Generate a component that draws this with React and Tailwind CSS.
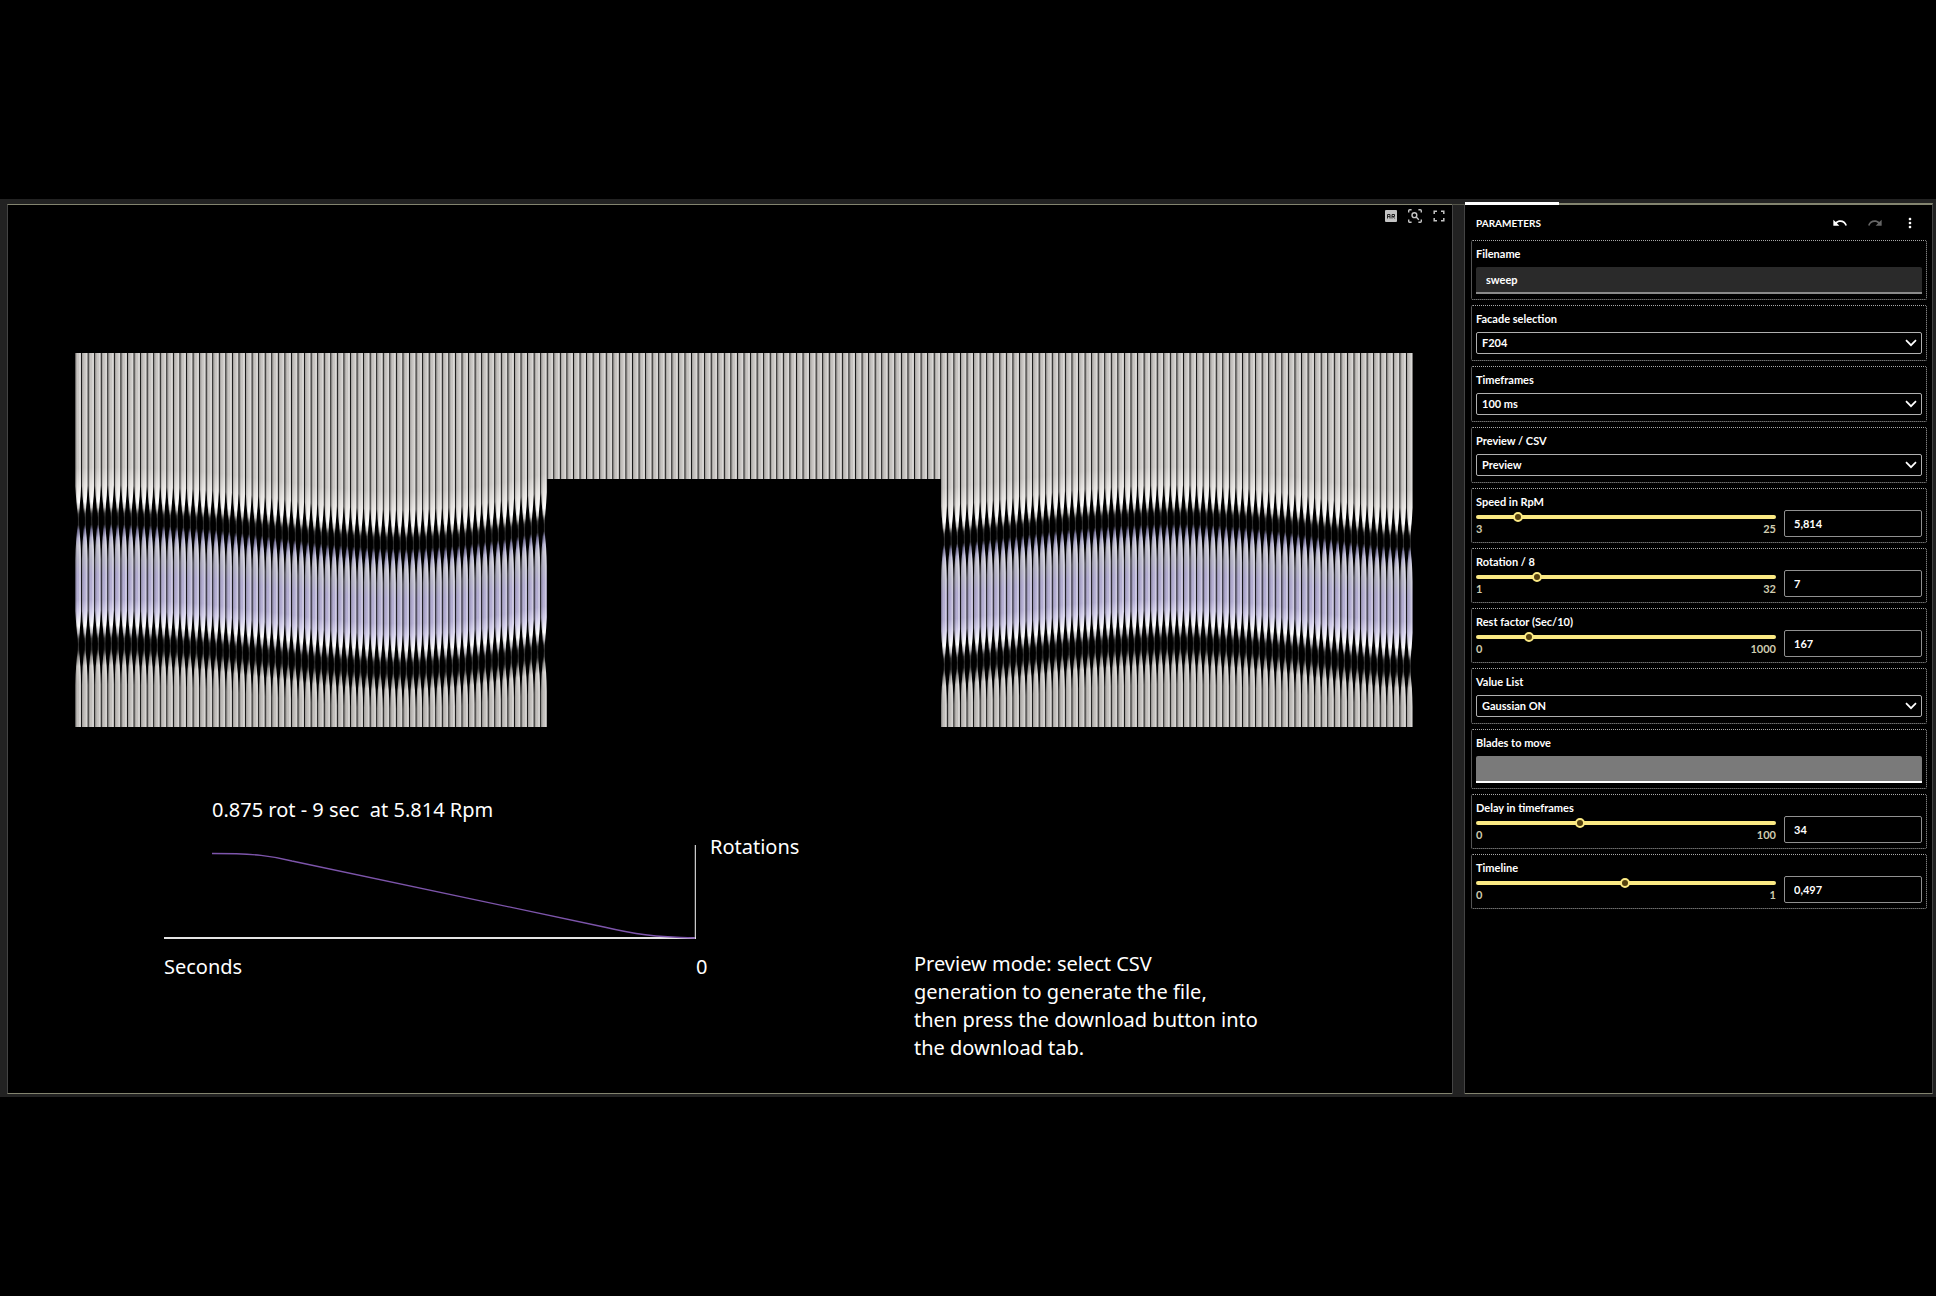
import { useState } from "react";
import { MdMoreVert, MdRedo, MdUndo } from "react-icons/md";

const PITCH = 1338 / 204;
const FACADE_HEIGHT = 374;
const DOOR_HEIGHT = 126;
const TWIST_GAP = 125;

// [x, y] of the first twist of the blades, on both wings of the facade
const LEFT_WAVE = [
  [0, 167],
  [35, 166],
  [85, 168],
  [130, 171],
  [202, 180],
  [245, 186],
  [295, 190],
  [328, 191],
  [378, 188],
  [428, 181],
  [472, 172],
];
const RIGHT_WAVE = [
  [866, 187],
  [925, 180],
  [985, 172],
  [1035, 168],
  [1080, 166],
  [1115, 166],
  [1165, 169],
  [1215, 175],
  [1265, 183],
  [1305, 188],
  [1338, 189],
];

// half width of a blade around one twist
const TWIST_PROFILE = [
  [-34, 2.85],
  [-24, 2.3],
  [-15, 1.5],
  [-8, 1],
  [0, 0.8],
  [8, 1],
  [15, 1.6],
  [22, 2.2],
  [30, 2.6],
  [40, 2.85],
];

const BLADE_STOPS = [
  [-190, "#c6c3c0"],
  [-52, "#cac7c4"],
  [-30, "#ebe8e5"],
  [-18, "#ffffff"],
  [-12, "#cac8c6"],
  [-6, "#262626"],
  [-2, "#080808"],
  [5, "#080808"],
  [10, "#6c6990"],
  [18, "#b3b0d0"],
  [26, "#c6c4d2"],
  [40, "#b7b5c8"],
  [55, "#b2acd0"],
  [80, "#b5afd3"],
  [92, "#d2cdea"],
  [106, "#ffffff"],
  [113, "#b8b6bc"],
  [119, "#262626"],
  [124, "#080808"],
  [130, "#181818"],
  [137, "#8c8a88"],
  [146, "#cfccc9"],
  [164, "#bfbcb9"],
  [240, "#c6c3c0"],
];

function waveAt(wave, x) {
  for (let i = 1; i < wave.length; i++) {
    const [x0, y0] = wave[i - 1];
    const [x1, y1] = wave[i];
    if (x <= x1) return y0 + ((y1 - y0) * (x - x0)) / (x1 - x0);
  }
  return wave[wave.length - 1][1];
}

function bladePath(from, to) {
  const profile = [
    [-200, 2.85],
    ...TWIST_PROFILE,
    ...TWIST_PROFILE.map(([y, w]) => [y + TWIST_GAP, w]),
    [250, 2.85],
  ];
  const c = PITCH / 2;
  const right = profile.map(([y, w]) => `${(c + w * to).toFixed(2)} ${y}`);
  const left = profile
    .map(([y, w]) => `${(c + w * from).toFixed(2)} ${y}`)
    .reverse();
  return `M${right.concat(left).join("L")}Z`;
}

function Facade() {
  const blades = Array.from({ length: 204 }, (_, i) => i);
  const wings = blades.filter((i) => i < 72 || i >= 132);
  const middle = blades.filter((i) => i >= 72 && i < 132);

  return (
    <svg
      viewBox={`0 0 1338 ${FACADE_HEIGHT}`}
      className="block w-full"
      role="img"
      aria-label="Facade"
    >
      <defs>
        <linearGradient
          id="bladeFill"
          gradientUnits="userSpaceOnUse"
          x1="0"
          y1="-190"
          x2="0"
          y2="240"
        >
          {BLADE_STOPS.map(([y, color]) => (
            <stop key={y} offset={(y + 190) / 430} stopColor={color} />
          ))}
        </linearGradient>
        <clipPath id="facadeClip">
          <rect width="1338" height={FACADE_HEIGHT} />
        </clipPath>
        <g id="blade">
          <path d={bladePath(-1, 1)} fill="url(#bladeFill)" />
          <path d={bladePath(-1, -0.5)} fill="#000" opacity="0.15" />
          <path d={bladePath(0.3, 0.85)} fill="#fff" opacity="0.35" />
        </g>
      </defs>
      <g clipPath="url(#facadeClip)">
        {wings.map((i) => {
          const x = i * PITCH;
          const y = waveAt(i < 72 ? LEFT_WAVE : RIGHT_WAVE, x);
          return <use key={i} href="#blade" x={x} y={y} />;
        })}
      </g>
      {middle.map((i) => (
        <g key={i} transform={`translate(${i * PITCH} 0)`}>
          <rect x="0.4" width="5.7" height={DOOR_HEIGHT} fill="#c6c3c0" />
          <rect
            x="0.4"
            width="1.4"
            height={DOOR_HEIGHT}
            fill="#000"
            opacity="0.15"
          />
          <rect
            x="4.1"
            width="1.6"
            height={DOOR_HEIGHT}
            fill="#fff"
            opacity="0.35"
          />
        </g>
      ))}
    </svg>
  );
}

function RotationChart() {
  return (
    <figure className="w-[532px]">
      <figcaption className="pl-12 whitespace-pre">
        0.875 rot - 9 sec  at 5.814 Rpm
      </figcaption>
      <div className="mt-[9px] flex items-start">
        <svg
          viewBox="0 0 532 106"
          className="w-[532px] shrink-0"
          fill="none"
          aria-hidden="true"
        >
          <path d="M531.5 12V106" stroke="#c8c8c8" strokeWidth="1.5" />
          <path d="M0 105H532" stroke="#e4e4e4" strokeWidth="2" />
          <path
            d="M48 20.5C92 20.5 108 23 128 28L440 94C470 101 490 104 531 105"
            stroke="#7d55ab"
            strokeWidth="1.3"
          />
        </svg>
        <span className="ml-[14px]">Rotations</span>
      </div>
      <div className="mt-[14px] flex justify-between">
        <span>Seconds</span>
        <span className="w-0">0</span>
      </div>
    </figure>
  );
}

function Viewer() {
  return (
    <main className="mt-px min-w-0 flex-1 border-t border-b border-l border-t-[#83846f] border-b-[#83846f] border-l-[#444] bg-black pb-[31px] font-['Noto_Sans','Open_Sans',sans-serif] text-[20px] leading-7 text-white">
      <div className="flex justify-end gap-[10px] pt-1 pr-[6px] text-[#c4c4c4]">
        <button aria-label="View in AR">
          <svg viewBox="0 0 14 14" className="size-[14px]">
            <rect x="1" y="1" width="12" height="12" rx="1" fill="currentColor" />
            <path
              d="M3.5 9.5V5.5h2.5v4M3.5 7.6h2.5M8 9.5V5.5h2.5v2H8M9.3 7.6l1.3 1.9"
              fill="none"
              stroke="#222"
              strokeWidth="1"
            />
          </svg>
        </button>
        <button aria-label="Zoom to fit">
          <svg
            viewBox="0 0 14 14"
            className="size-[14px]"
            fill="none"
            stroke="currentColor"
            strokeWidth="1.4"
          >
            <path d="M.7 3.6V1.7a1 1 0 0 1 1-1h1.9M10.4.7h1.9a1 1 0 0 1 1 1v1.9M13.3 10.4v1.9a1 1 0 0 1-1 1h-1.9M3.6 13.3H1.7a1 1 0 0 1-1-1v-1.9" />
            <circle cx="6.4" cy="6.2" r="2.4" />
            <path d="M8.2 8l2.6 2.7" />
          </svg>
        </button>
        <button className="px-px" aria-label="Fullscreen">
          <svg
            viewBox="0 0 12 14"
            className="h-[14px] w-3"
            fill="none"
            stroke="currentColor"
            strokeWidth="1.5"
          >
            <path d="M1.2 5V2.2H4M8 2.2h2.8V5M10.8 9v2.8H8M4 11.8H1.2V9" />
          </svg>
        </button>
      </div>
      <div className="pt-[130px] pr-[39px] pl-[67px]">
        <Facade />
      </div>
      <div className="mt-[69px] flex items-start pl-[156px]">
        <RotationChart />
        <p className="ml-[218px] w-[350px] pt-[154px]">
          Preview mode: select CSV
          <br />
          generation to generate the file,
          <br />
          then press the download button into
          <br />
          the download tab.
        </p>
      </div>
    </main>
  );
}

function Field(props) {
  return (
    <div className="rounded-xs border border-dotted border-[#a8a8a8] px-1 py-[5px]">
      {props.children}
    </div>
  );
}

function TextField(props) {
  return (
    <Field>
      <label htmlFor={props.id} className="block">
        {props.label}
      </label>
      <input
        id={props.id}
        type="text"
        defaultValue={props.value}
        className={`mt-[5px] block h-[27px] w-full rounded-t-xs border-b-2 px-[10px] outline-none ${props.className}`}
      />
    </Field>
  );
}

function SelectField(props) {
  return (
    <Field>
      <label htmlFor={props.id} className="block">
        {props.label}
      </label>
      <div className="relative mt-[5px] h-[23px]">
        <select
          id={props.id}
          defaultValue={props.options[0]}
          className="block h-[22px] w-full appearance-none rounded-xs border border-[#b0b0b0] bg-black px-[5px] outline-none"
        >
          {props.options.map((option) => (
            <option key={option}>{option}</option>
          ))}
        </select>
        <svg
          viewBox="0 0 12 8"
          className="pointer-events-none absolute top-[7px] right-[5px] h-2 w-3"
          fill="none"
          stroke="#fff"
          strokeWidth="1.7"
          aria-hidden="true"
        >
          <path d="M1 1.2l5 5 5-5" />
        </svg>
      </div>
    </Field>
  );
}

function SliderField(props) {
  const [value, setValue] = useState(props.value);

  return (
    <Field>
      <div className="flex h-[43px] gap-2">
        <div className="min-w-0 flex-1">
          <label htmlFor={props.id} className="block">
            {props.label}
          </label>
          <input
            id={props.id}
            type="range"
            min={props.min}
            max={props.max}
            step={props.step}
            value={value}
            onChange={(e) => setValue(Number(e.target.value))}
            className="mt-[2px] block h-[10px] w-full appearance-none bg-transparent outline-none [&::-webkit-slider-runnable-track]:h-1 [&::-webkit-slider-runnable-track]:rounded-full [&::-webkit-slider-runnable-track]:bg-[#fbe983] [&::-webkit-slider-thumb]:-mt-[3px] [&::-webkit-slider-thumb]:size-[10px] [&::-webkit-slider-thumb]:appearance-none [&::-webkit-slider-thumb]:rounded-full [&::-webkit-slider-thumb]:border-2 [&::-webkit-slider-thumb]:border-[#fbe983] [&::-webkit-slider-thumb]:bg-[#54400f]"
          />
          <div className="mt-px flex justify-between leading-3 text-[#cfccb0]">
            <span>{props.min}</span>
            <span>{props.max}</span>
          </div>
        </div>
        <input
          type="text"
          inputMode="decimal"
          aria-label={`${props.label} value`}
          value={String(value).replace(".", ",")}
          onChange={(e) => {
            const next = Number(e.target.value.replace(",", "."));
            if (!Number.isNaN(next)) setValue(next);
          }}
          className="h-[27px] w-[138px] self-end rounded-xs border border-[#909090] bg-black px-[9px] outline-none"
        />
      </div>
    </Field>
  );
}

function Parameters() {
  return (
    <aside className="relative w-[468px] shrink-0 border-t-2 border-r border-b border-t-[#83846f] border-r-[#444] border-b-[#83846f] bg-black pr-[5px] pl-[6px] font-['Lato',sans-serif] text-[11px] leading-4 font-bold text-white">
      <div className="absolute -top-[3px] left-0 h-[3px] w-[94px] bg-white" />
      <div className="flex h-[35px] items-center justify-between pr-[9px] pl-[5px]">
        <h2 className="text-[10px]">PARAMETERS</h2>
        <div className="flex gap-[19px]">
          <button aria-label="Undo">
            <MdUndo className="size-4" />
          </button>
          <button aria-label="Redo" className="text-[#666]">
            <MdRedo className="size-4" />
          </button>
          <button aria-label="More options">
            <MdMoreVert className="size-4" />
          </button>
        </div>
      </div>
      <div className="flex flex-col gap-[5px]">
        <TextField
          id="filename"
          label="Filename"
          value="sweep"
          className="border-[#8a8a8a] bg-[#2a2a2a]"
        />
        <SelectField id="facade" label="Facade selection" options={["F204"]} />
        <SelectField id="timeframes" label="Timeframes" options={["100 ms"]} />
        <SelectField
          id="mode"
          label="Preview / CSV"
          options={["Preview", "CSV generation"]}
        />
        <SliderField
          id="speed"
          label="Speed in RpM"
          min={3}
          max={25}
          step={0.001}
          value={5.814}
        />
        <SliderField
          id="rotation"
          label="Rotation / 8"
          min={1}
          max={32}
          step={1}
          value={7}
        />
        <SliderField
          id="rest"
          label="Rest factor (Sec/10)"
          min={0}
          max={1000}
          step={1}
          value={167}
        />
        <SelectField
          id="values"
          label="Value List"
          options={["Gaussian ON", "Gaussian OFF"]}
        />
        <TextField
          id="blades"
          label="Blades to move"
          value=""
          className="border-white bg-[#7a7a7a]"
        />
        <SliderField
          id="delay"
          label="Delay in timeframes"
          min={0}
          max={100}
          step={1}
          value={34}
        />
        <SliderField
          id="timeline"
          label="Timeline"
          min={0}
          max={1}
          step={0.001}
          value={0.497}
        />
      </div>
    </aside>
  );
}

export default function App() {
  return (
    <div className="flex min-h-screen flex-col justify-center bg-black">
      <div className="flex bg-[#222] pt-1 pr-[3px] pb-[3px] pl-[7px]">
        <Viewer />
        <div className="mt-px w-[13px] shrink-0 border-x border-t border-x-[#444] border-t-[#55564a]" />
        <Parameters />
      </div>
    </div>
  );
}
